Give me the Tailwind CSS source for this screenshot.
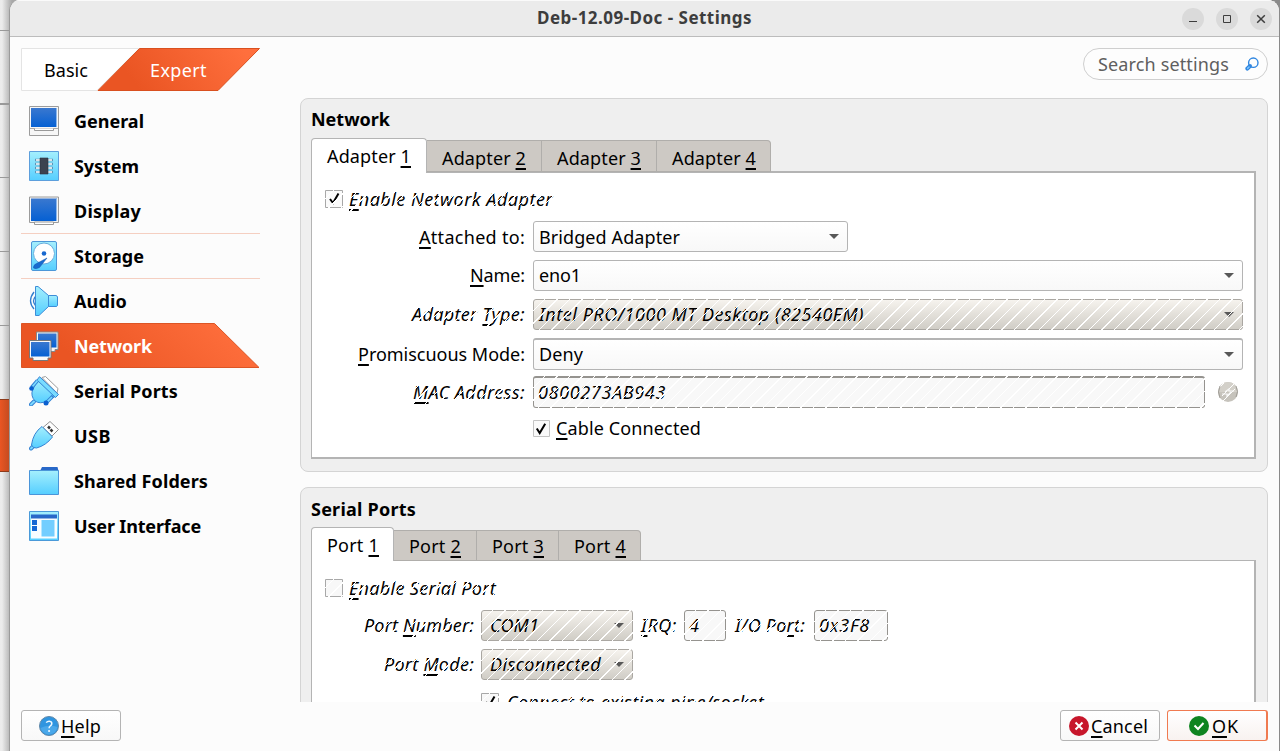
<!DOCTYPE html>
<html lang="en">
<head>
<meta charset="utf-8">
<title>Deb-12.09-Doc - Settings</title>
<script src="https://cdn.jsdelivr.net/npm/@tailwindcss/browser@4"></script>
</head>
<body class="relative h-[751px] w-[1280px] overflow-hidden bg-[#8a8a8a] font-['Noto_Sans',sans-serif] text-[18px] leading-[24px] text-black">

<!-- Window behind, visible along the left edge -->
<div class="absolute inset-y-0 left-0 w-5 bg-linear-to-r from-[#ececec] to-[#a8a8a8] from-10% to-60%">
  <div class="mt-[30px] h-px bg-[#999]"></div>
  <div class="mt-[72px] h-[2px] bg-[#999]"></div>
  <div class="mt-[72px] h-px bg-[#999]"></div>
  <div class="mt-[73px] h-px bg-[#999]"></div>
  <div class="mt-[73px] h-px bg-[#999]"></div>
  <div class="mt-[73px] h-[73px] border-y border-[#8d3a1a] bg-linear-to-r from-[#ea5523] to-[#b9481f] to-60%"></div>
</div>

<div class="relative ml-[9px] flex h-[751px] w-[1270px] flex-col overflow-hidden rounded-t-[11px] border-l border-[#9b9b9b] bg-[#fcfcfc]">
  <!-- Title bar -->
  <header class="relative flex h-[37px] shrink-0 items-center justify-end gap-3 border-t border-b border-t-[#fafafa] border-b-[#bcbcbc] bg-[#ebebeb] pr-[7px]">
    <h1 class="absolute top-[5px] left-[527px] font-bold text-[17px] text-[#3d3d3d]"><span data-w="215">Deb-12.09-Doc - Settings</span></h1>
    <svg class="size-[22px]" viewBox="0 0 22 22"><circle cx="11" cy="11" r="11" fill="#dadada"/><path d="M7 13.5h8" stroke="#3d3d3d"/></svg>
    <svg class="size-[22px]" viewBox="0 0 22 22"><circle cx="11" cy="11" r="11" fill="#dadada"/><path d="M7.5 7.5h7v7h-7z" fill="none" stroke="#3d3d3d"/></svg>
    <svg class="size-[22px]" viewBox="0 0 22 22"><circle cx="11" cy="11" r="11" fill="#dadada"/><path d="M7.2 7.2l7.6 7.6M14.8 7.2l-7.6 7.6" stroke="#3d3d3d" stroke-width="1.5"/></svg>
  </header>

  <!-- Mode tabs and search -->
  <div class="flex h-[61px] shrink-0 items-start justify-between pt-[11px] pr-[11px] pl-[11px]">
    <div class="relative h-[43px] w-[240px]">
      <svg class="absolute inset-0 h-[43px] w-[240px]" viewBox="0 0 240 43">
        <defs><linearGradient id="tab" x1="0" x2="1" y1="0.2" y2="0"><stop offset="0.1" stop-color="#ea5523"/><stop offset="0.9" stop-color="#ff6f3d"/></linearGradient></defs>
        <path d="M.5.5H118L76 42.5H.5z" fill="#fff" stroke="#e4e4e4"/>
        <path d="M118.500.5H238.500L197 42.500H77z" fill="url(#tab)" stroke="#d9501f"/>
      </svg>
      <span class="absolute top-[10px] left-[23px]" data-w="44">Basic</span>
      <span class="absolute top-[10px] left-[129px] text-white" data-w="57">Expert</span>
    </div>
    <div class="flex h-8 w-[185px] items-center justify-between rounded-full border border-[#cfcfcf] bg-[#fdfdfd] pr-[7px] pl-[14px] text-[#5f5f5f]">
      <span data-w="131">Search settings</span>
      <svg class="size-4 shrink-0" viewBox="0 0 16 16" fill="none"><circle cx="9.300" cy="6.700" r="4.700" stroke="#2f86e0" stroke-width="1.400"/><path d="M6 10L3.300 12.700" stroke="#2f86e0" stroke-width="4" stroke-linecap="round"/><path d="M5 11l-1.400 1.400" stroke="#7cc4ff" stroke-width="1.500" stroke-linecap="round"/></svg>
    </div>
  </div>

  <div class="flex h-[604px] shrink-0">
    <!-- Categories -->
    <nav class="ml-[11px] w-[239px] shrink-0 font-bold">
      <svg class="absolute size-0"><defs>
        <linearGradient id="scr" x1="0" x2="0" y1="0" y2="1"><stop stop-color="#3a78cf"/><stop offset="1" stop-color="#0560d3"/></linearGradient>
        <linearGradient id="sky" x1="0" x2="0" y1="0" y2="1"><stop stop-color="#a5effd"/><stop offset="1" stop-color="#55ceff"/></linearGradient>
      </defs></svg>
      <a class="flex h-[45px] items-center pl-2">
        <svg class="mr-[15px] size-[30px]" viewBox="0 0 30 30"><path d="M.5.5h29v29H.5z" fill="#f6f6f6" stroke="#9c9c9c"/><path d="M1 22.500h28" stroke="#aaa"/><path d="M5.500 22.500v2h19v-2" fill="#fff" stroke="#999"/><path d="M2 2h26v19H2z" fill="url(#scr)"/><path d="M27.500 2v19" stroke="#8db8ec"/></svg>
        <span data-w="70">General</span></a>
      <a class="flex h-[45px] items-center pl-2">
        <svg class="mr-[15px] size-[30px]" viewBox="0 0 30 30"><path d="M.5.5h29v29H.5z" fill="url(#sky)" stroke="#5d9fdc"/><path d="M6 9h18M6 13h18M6 17h18M6 21h18" stroke="#5d93b5" stroke-width="2.600"/><path d="M7 9h16M7 13h16M7 17h16M7 21h16" stroke="#fff" stroke-width="1.400"/><path d="M11 7h8v16h-8z" fill="#3c4350" stroke="#2b313c" stroke-width=".6"/></svg>
        <span data-w="65">System</span></a>
      <a class="flex h-[45px] items-center pl-2">
        <svg class="mr-[15px] size-[30px]" viewBox="0 0 30 30"><path d="M.5 1h29v25.500H.5z" fill="#f3f3f3" stroke="#9c9c9c"/><path d="M5.500 26v2.500h19V26z" fill="#fff" stroke="#999"/><path d="M2 2.500h26V25H2z" fill="url(#scr)"/><path d="M27.500 2.500V25" stroke="#8db8ec"/></svg>
        <span data-w="67">Display</span></a>
      <a class="flex h-[45px] items-center border-t border-[#f5cfc1] pl-2">
        <svg class="mr-[15px] size-[30px]" viewBox="0 0 30 30"><rect x="2.500" y=".5" width="25" height="29" rx="1.500" fill="url(#sky)" stroke="#4d97d8"/><circle cx="15" cy="12.500" r="10.500" fill="#fff" stroke="#69aedd"/><circle cx="15" cy="12.500" r="2.300" fill="#1868cf"/><path d="M18 17L10.500 26.500Q7 28.500 4.500 27Q4 24 7.500 22.500Z" fill="#176bd0" stroke="#1456ac" stroke-width=".5"/></svg>
        <span data-w="70">Storage</span></a>
      <a class="flex h-[45px] items-center border-t border-[#f5cfc1] pl-2">
        <svg class="mr-[15px] size-[30px]" viewBox="0 0 30 30"><path d="M5 6Q-2 15 5 23M6.500 10.500Q2.500 15 6.500 19.500" fill="none" stroke="#307dce" stroke-width="1.300"/><path d="M6.500.5H9L19.500 9.500V20.500L10 29.500H6.500z" fill="url(#sky)" stroke="#3d8dd8"/><path d="M19.500 9.500H27Q28.500 10 28.500 11V19.500Q28 20.500 27 20.500H19.500z" fill="url(#sky)" stroke="#3d8dd8"/></svg>
        <span data-w="53">Audio</span></a>
      <a class="relative flex h-[45px] items-center pl-2 text-white">
        <svg class="absolute inset-0 h-[45px] w-[239px]" viewBox="0 0 239 45"><path d="M.5.5H193.500L238 44.500H.5z" fill="url(#tab)" stroke="#dc5525"/></svg>
        <svg class="relative mr-[15px] size-[30px]" viewBox="0 0 30 30" stroke-linejoin="round"><path d="M7.500 1h21.500v17.500h-3v2H12v-2H7.500z" fill="#f5f5f5" stroke="#888"/><path d="M9 2.500h18.500v14H9z" fill="url(#scr)"/><path d="M.5 9.500h21.500V27h-3v2.500H4V27H.5z" fill="#f8f8f8" stroke="#777"/><path d="M2 11h18.500v14.500H2z" fill="url(#scr)"/></svg>
        <span class="relative" data-w="78">Network</span></a>
      <a class="flex h-[45px] items-center pl-2">
        <svg class="mr-[15px] size-[30px]" viewBox="0 0 30 30" stroke-linejoin="round"><path d="M13 1.500L16.500.5L29 12.500L28 17z" fill="#fff" stroke="#9b9b9b"/><path d="M5 25.500L2 28.500" stroke="#3584d4" stroke-width="4" stroke-linecap="round"/><path d="M5 25.500L2 28.500" stroke="#7bd9ff" stroke-width="2" stroke-linecap="round"/><path d="M9 3.500L26 20.500L18 25Q11 28.500 6 25Q1.500 20 3.500 14z" fill="url(#sky)" stroke="#3584d4"/><path d="M10.500.7L29.500 18.500L26.500 21.500L8 4z" fill="#79dcff" stroke="#3584d4"/><path d="M8.500 4.500L2.500 11.500M24 20L17.500 26.500" stroke="#3584d4" stroke-width="3.500"/><path d="M8.500 4.500L3.500 10.500M23 21L18.500 25.500" stroke="#7bd9ff" stroke-width="1.700"/><circle cx="2.500" cy="12.500" r="2.300" fill="#0b60cf"/><circle cx="17" cy="27" r="2.500" fill="#0b60cf"/></svg>
        <span data-w="104">Serial Ports</span></a>
      <a class="flex h-[45px] items-center pl-2">
        <svg class="mr-[15px] size-[30px]" viewBox="0 0 30 30" stroke-linejoin="round"><path d="M14 6.500L21 .5L29.500 8.500L23 15z" fill="#fff" stroke="#8f8f8f"/><path d="M19 5.500l2 2M21.500 8.500l2 2" stroke="#333" stroke-width="2.500"/><path d="M4.500 25L2 27.500" stroke="#3584d4" stroke-width="4" stroke-linecap="round"/><path d="M4.500 25L2 27.500" stroke="#7bd9ff" stroke-width="2" stroke-linecap="round"/><path d="M13 5.500L23.500 16Q17 24.500 7.500 27L4.500 26.500L2.500 24Q4 12 13 5.500z" fill="url(#sky)" stroke="#3584d4"/></svg>
        <span data-w="37">USB</span></a>
      <a class="flex h-[45px] items-center pl-2">
        <svg class="mr-[15px] size-[30px]" viewBox="0 0 30 30"><path d="M11 5L13 1H28.500L29.500 5z" fill="#2868c8"/><path d="M.5 4.500h29v24H.5z" fill="url(#sky)" stroke="#4a95d9"/></svg>
        <span data-w="134">Shared Folders</span></a>
      <a class="flex h-[45px] items-center pl-2">
        <svg class="mr-[15px] size-[30px]" viewBox="0 0 30 30"><path d="M.5.5h29v29H.5z" fill="url(#sky)" stroke="#4a9ad9"/><path d="M2 7h26v20.500H2z" fill="#f8fdff"/><path d="M2 3.500h26v4H2z" fill="#2868c8"/><path d="M3 9h5v5H3zM3 15h5v5H3z" fill="#1468d4"/><path d="M12.500 9h13v16.500h-13z" fill="#73ceff"/></svg>
        <span data-w="127">User Interface</span></a>
    </nav>

    <!-- Settings pages -->
    <main class="ml-[40px] flex h-[604px] w-[968px] flex-col gap-[15px] overflow-hidden">
      <section class="h-[374px] shrink-0 rounded-lg border border-[#d4d4d4] bg-[#efefef] px-[10px] pt-[8px]">
        <h2 class="h-[31px] font-bold"><span data-w="79">Network</span></h2>
        <div class="relative z-10 flex h-[34px] items-end">
          <div class="h-[35px] w-[116px] -mb-px rounded-t-sm border border-b-0 border-[#b4b4b4] bg-white pt-[5px] pl-[15px]"><span data-w="84">Adapter <u class="decoration-[1.5px] underline-offset-[3px]">1</u></span></div>
          <div class="h-[32px] w-[115px] border border-l-0 border-[#b0aeab] bg-[#cdc9c4] pt-[5px] pl-[15px]"><span data-w="84">Adapter <u class="decoration-[1.5px] underline-offset-[3px]">2</u></span></div>
          <div class="h-[32px] w-[115px] border border-l-0 border-[#b0aeab] bg-[#cdc9c4] pt-[5px] pl-[15px]"><span data-w="84">Adapter <u class="decoration-[1.5px] underline-offset-[3px]">3</u></span></div>
          <div class="h-[32px] w-[114px] rounded-tr-sm border border-l-0 border-[#b0aeab] bg-[#cdc9c4] pt-[5px] pl-[15px]"><span data-w="84">Adapter <u class="decoration-[1.5px] underline-offset-[3px]">4</u></span></div>
        </div>
        <div class="h-[288px] w-[945px] -mt-px border-2 border-l border-[#b4b4b4] bg-white pt-[14px]">
          <div class="relative ml-[13px] flex h-6 w-[232px] items-center italic">
            <svg class="mr-[6px] size-[18px] shrink-0" viewBox="0 0 18 18"><path d="M.5.5h17v17H.5z" fill="#fafafa" stroke="#a8a8a8"/><path d="M5 9l3 4 5.500-9.500" fill="none" stroke="#000" stroke-width="2"/></svg>
            <span data-w="204"><u class="decoration-[1.5px] underline-offset-[3px]">E</u>nable Network Adapter</span>
            <div class="absolute inset-0 bg-[repeating-linear-gradient(135deg,transparent_0_7.84px,white_7.84px_8.84px)]"></div>
          </div>
          <div class="mt-[10px] flex h-[31px] items-center">
            <div class="w-[213px] text-right"><span data-w="106"><u class="decoration-[1.5px] underline-offset-[3px]">A</u>ttached to:</span></div>
            <div class="ml-2 flex h-[31px] w-[315px] items-center justify-between rounded-[3px] border border-[#b4b4b4] bg-linear-to-b from-white to-[#f8f8f8] pr-2 pl-[5px]"><span data-w="141">Bridged Adapter</span><svg class="h-[5px] w-[10px]" viewBox="0 0 10 5"><path d="M0 0h10L5 5z" fill="#585858"/></svg></div>
          </div>
          <div class="mt-2 flex h-[31px] items-center">
            <div class="w-[213px] pb-px text-right"><span data-w="55"><u class="decoration-[1.5px] underline-offset-[3px]">N</u>ame:</span></div>
            <div class="ml-2 flex h-[31px] w-[710px] items-center justify-between rounded-[3px] border border-[#b4b4b4] bg-linear-to-b from-white to-[#f8f8f8] pr-2 pb-px pl-[5px]"><span data-w="42">eno1</span><svg class="h-[5px] w-[10px]" viewBox="0 0 10 5"><path d="M0 0h10L5 5z" fill="#585858"/></svg></div>
          </div>
          <div class="mt-2 flex h-[31px] items-center italic">
            <div class="relative w-[213px] pb-px text-right"><span data-w="113">Adapter <u class="decoration-[1.5px] underline-offset-[3px]">T</u>ype:</span><div class="absolute inset-0 bg-[repeating-linear-gradient(135deg,transparent_0_7.84px,white_7.84px_8.84px)]"></div></div>
            <div class="relative ml-2 flex h-[31px] w-[710px] items-center justify-between rounded-[3px] border border-[#aaa7a2] bg-linear-to-b from-[#f6f3ee] to-[#d0cdc6] pr-2 pb-px pl-[5px]"><span data-w="325">Intel PRO/1000 MT Desktop (82540EM)</span><svg class="h-[5px] w-[10px]" viewBox="0 0 10 5"><path d="M0 0h10L5 5z" fill="#585858"/></svg><div class="absolute -inset-px bg-[repeating-linear-gradient(135deg,transparent_0_7.84px,white_7.84px_8.84px)]"></div></div>
          </div>
          <div class="mt-2 flex h-[32px] items-center">
            <div class="w-[213px] text-right"><span data-w="167"><u class="decoration-[1.5px] underline-offset-[3px]">P</u>romiscuous Mode:</span></div>
            <div class="ml-2 flex h-[32px] w-[710px] items-center justify-between rounded-[3px] border border-t-2 border-[#b4b4b4] bg-linear-to-b from-white to-[#f8f8f8] pr-2 pb-px pl-[5px]"><span data-w="44">Deny</span><svg class="h-[5px] w-[10px]" viewBox="0 0 10 5"><path d="M0 0h10L5 5z" fill="#585858"/></svg></div>
          </div>
          <div class="mt-[6px] flex h-[32px] items-center italic">
            <div class="relative w-[213px] text-right"><span data-w="112"><u class="decoration-[1.5px] underline-offset-[3px]">M</u>AC Address:</span><div class="absolute inset-0 bg-[repeating-linear-gradient(135deg,transparent_0_7.84px,white_7.84px_8.84px)]"></div></div>
            <div class="relative ml-2 flex h-[32px] w-[672px] items-center rounded-[3px] border border-t-2 border-[#95938f] bg-[#f8f8f8] pb-px pl-1"><span data-w="128">0800273AB943</span><div class="absolute -inset-x-px -top-[2px] -bottom-px bg-[repeating-linear-gradient(135deg,transparent_0_7.84px,white_7.84px_8.84px)]"></div></div>
            <svg class="ml-[12px] size-[22px]" viewBox="0 0 22 22"><circle cx="11" cy="11" r="10" fill="#c6c3bc"/><path d="M1 11A10 10 0 0 1 21 11z" fill="#d3d0c9"/><path d="M5 15l5-5M12 8l6-6M6 20l12-12M2 7l5-5" stroke="#fff" stroke-width="1"/><path d="M8 11l4-3v2h5M14 11l-4 4v-2H5" stroke="#f7f7f7" stroke-width="1.200" fill="none"/><path d="M3 17Q0 11 3 5M19 5Q22 11 19 16" stroke="#a09d97" fill="none"/></svg>
          </div>
          <div class="mt-[8px] ml-[221px] flex h-6 items-center">
            <svg class="mr-[6px] size-[17px] shrink-0" viewBox="0 0 17 17"><path d="M.5.5h16v16H.5z" fill="#fafafa" stroke="#c4c4c4"/><path d="M3.800 8.500l2.900 4.500 5.500-9.300" fill="none" stroke="#000" stroke-width="2"/></svg>
            <span data-w="145"><u class="decoration-[1.5px] underline-offset-[3px]">C</u>able Connected</span>
          </div>
        </div>
      </section>

      <section class="h-[374px] shrink-0 rounded-lg border border-[#d4d4d4] bg-[#efefef] px-[10px] pt-[9px]">
        <h2 class="h-[30px] font-bold"><span data-w="105">Serial Ports</span></h2>
        <div class="relative z-10 flex h-[34px] items-end">
          <div class="h-[34px] w-[83px] rounded-t-sm border border-b-0 border-[#b4b4b4] bg-white pt-[5px] pl-[15px]"><span data-w="52">Port <u class="decoration-[1.5px] underline-offset-[3px]">1</u></span></div>
          <div class="h-[31px] w-[83px] border border-l-0 border-[#b0aeab] bg-[#cdc9c4] pt-[3px] pl-[15px]"><span data-w="52">Port <u class="decoration-[1.5px] underline-offset-[3px]">2</u></span></div>
          <div class="h-[31px] w-[82px] border border-l-0 border-[#b0aeab] bg-[#cdc9c4] pt-[3px] pl-[15px]"><span data-w="52">Port <u class="decoration-[1.5px] underline-offset-[3px]">3</u></span></div>
          <div class="h-[31px] w-[82px] rounded-tr-sm border border-l-0 border-[#b0aeab] bg-[#cdc9c4] pt-[3px] pl-[15px]"><span data-w="52">Port <u class="decoration-[1.5px] underline-offset-[3px]">4</u></span></div>
        </div>
        <div class="h-[288px] w-[945px] -mt-px border border-r-2 border-[#b4b4b4] bg-white pt-[15px]">
          <div class="relative ml-[13px] flex h-6 w-[180px] items-center italic">
            <svg class="mr-[6px] size-[18px] shrink-0" viewBox="0 0 18 18"><path d="M.5.5h17v17H.5z" fill="#f8f8f8" stroke="#a8a8a8"/></svg>
            <span data-w="147"><u class="decoration-[1.5px] underline-offset-[3px]">E</u>nable Serial Port</span>
            <div class="absolute inset-0 bg-[repeating-linear-gradient(135deg,transparent_0_7.84px,white_7.84px_8.84px)]"></div>
          </div>
          <div class="mt-[10px] flex h-[31px] items-center italic">
            <div class="relative w-[162px] pb-px text-right"><span data-w="110">Port <u class="decoration-[1.5px] underline-offset-[3px]">N</u>umber:</span><div class="absolute inset-0 bg-[repeating-linear-gradient(135deg,transparent_0_7.84px,white_7.84px_8.84px)]"></div></div>
            <div class="relative ml-[7px] flex h-[31px] w-[152px] items-center justify-between rounded-[3px] border border-[#aaa7a2] bg-linear-to-b from-[#f6f3ee] to-[#d0cdc6] pr-2 pb-px pl-[8px]"><span data-w="49">COM1</span><svg class="h-[5px] w-[10px]" viewBox="0 0 10 5"><path d="M0 0h10L5 5z" fill="#585858"/></svg><div class="absolute -inset-px bg-[repeating-linear-gradient(135deg,transparent_0_7.84px,white_7.84px_8.84px)]"></div></div>
            <div class="relative ml-[8px] w-[43px] pb-px"><span data-w="36"><u class="decoration-[1.5px] underline-offset-[3px]">I</u>RQ:</span><div class="absolute inset-0 bg-[repeating-linear-gradient(135deg,transparent_0_7.84px,white_7.84px_8.84px)]"></div></div>
            <div class="relative flex h-[31px] w-[42px] items-center rounded-[3px] border border-[#95938f] bg-[#f8f8f8] pb-px pl-1"><span data-w="10">4</span><div class="absolute -inset-px bg-[repeating-linear-gradient(135deg,transparent_0_7.84px,white_7.84px_8.84px)]"></div></div>
            <div class="relative ml-[9px] w-[79px] pb-px"><span data-w="70">I/O Po<u class="decoration-[1.5px] underline-offset-[3px]">r</u>t:</span><div class="absolute inset-0 bg-[repeating-linear-gradient(135deg,transparent_0_7.84px,white_7.84px_8.84px)]"></div></div>
            <div class="relative flex h-[31px] w-[74px] items-center rounded-[3px] border border-[#95938f] bg-[#f8f8f8] pb-px pl-1"><span data-w="51">0x3F8</span><div class="absolute -inset-px bg-[repeating-linear-gradient(135deg,transparent_0_7.84px,white_7.84px_8.84px)]"></div></div>
          </div>
          <div class="mt-2 flex h-[31px] items-center italic">
            <div class="relative w-[162px] pb-px text-right"><span data-w="90">Port <u class="decoration-[1.5px] underline-offset-[3px]">M</u>ode:</span><div class="absolute inset-0 bg-[repeating-linear-gradient(135deg,transparent_0_7.84px,white_7.84px_8.84px)]"></div></div>
            <div class="relative ml-[7px] flex h-[31px] w-[152px] items-center justify-between rounded-[3px] border border-[#aaa7a2] bg-linear-to-b from-[#f6f3ee] to-[#d0cdc6] pr-2 pb-px pl-[8px]"><span data-w="111">Disconnected</span><svg class="h-[5px] w-[10px]" viewBox="0 0 10 5"><path d="M0 0h10L5 5z" fill="#585858"/></svg><div class="absolute -inset-px bg-[repeating-linear-gradient(135deg,transparent_0_7.84px,white_7.84px_8.84px)]"></div></div>
          </div>
          <div class="relative mt-[10px] ml-[169px] flex h-6 w-[290px] items-center italic">
            <svg class="mr-[8px] size-[18px] shrink-0" viewBox="0 0 18 18"><path d="M.5.5h17v17H.5z" fill="#f8f8f8" stroke="#a8a8a8"/><path d="M5 9l3 4 5.500-9.500" fill="none" stroke="#000" stroke-width="2"/></svg>
            <span data-w="257">Connect to existing pipe/socket</span>
            <div class="absolute inset-0 bg-[repeating-linear-gradient(135deg,transparent_0_7.84px,white_7.84px_8.84px)]"></div>
          </div>
        </div>
      </section>
    </main>
  </div>

  <!-- Buttons -->
  <footer class="flex pt-2 pr-[11px] pl-[11px]">
    <button class="flex h-[31px] w-[100px] items-center rounded-[3px] border border-[#b4b4b4] bg-linear-to-b from-white to-[#f8f8f8] pl-[17px]">
      <svg class="mr-[2px] size-5 shrink-0" viewBox="0 0 20 20"><circle cx="10" cy="10" r="9.500" fill="#2f95e0" stroke="#5f87a8"/><path d="M1.500 12Q10 8 18.500 11A8.700 8.700 0 0 1 1.500 12z" fill="#4aa8ea"/><path d="M7.200 6.600Q8.500 5 10.500 5.200Q13 5.600 12.800 7.800Q12.600 9 11.200 10Q10.100 11 10.100 12.300" fill="none" stroke="#eef8ff" stroke-width="1.500"/><circle cx="10.100" cy="15" r="1.100" fill="#eef8ff"/></svg>
      <span data-w="40"><u class="decoration-2 underline-offset-[3px]">H</u>elp</span></button>
    <button class="ml-auto flex h-[31px] w-[100px] items-center rounded-[3px] border border-[#b4b4b4] bg-linear-to-b from-white to-[#f8f8f8] pl-2">
      <svg class="mr-[2px] size-5 shrink-0" viewBox="0 0 20 20"><circle cx="10" cy="10" r="10" fill="#c7162b"/><path d="M6.500 6.500l7 7M13.500 6.500l-7 7" stroke="#fff" stroke-width="2"/></svg>
      <span data-w="57"><u class="decoration-2 underline-offset-[3px]">C</u>ancel</span></button>
    <button class="ml-[7px] flex h-[31px] w-[101px] items-center rounded-[3px] border border-r-2 border-[#f07a50] bg-linear-to-b from-white to-[#f8f2f0] pl-[21px]">
      <svg class="mr-[3px] size-5 shrink-0" viewBox="0 0 20 20"><circle cx="10" cy="10" r="10" fill="#0e8420"/><path d="M5.500 9.500l3.500 3.500 5.500-6" fill="none" stroke="#fff" stroke-width="2"/></svg>
      <span data-w="27"><u class="decoration-2 underline-offset-[3px]">O</u>K</span></button>
  </footer>
</div>

<script>
  // Spread each label's letters so that it takes up its own width.
  function fitLabels() {
    document.querySelectorAll('[data-w]').forEach(function (el) {
      if (getComputedStyle(el).position !== 'absolute') el.style.display = 'inline-block';
      el.style.whiteSpace = 'nowrap';
      el.style.flexShrink = '0';
      el.style.textDecorationSkipInk = 'none';
      el.style.letterSpacing = '0px';
      var gap = (Number(el.dataset.w) - el.getBoundingClientRect().width) / el.textContent.length;
      el.style.letterSpacing = gap + 'px';
    });
  }
  window.addEventListener('load', fitLabels);
  new MutationObserver(fitLabels).observe(document.head, { childList: true });
</script>
</body>
</html>
